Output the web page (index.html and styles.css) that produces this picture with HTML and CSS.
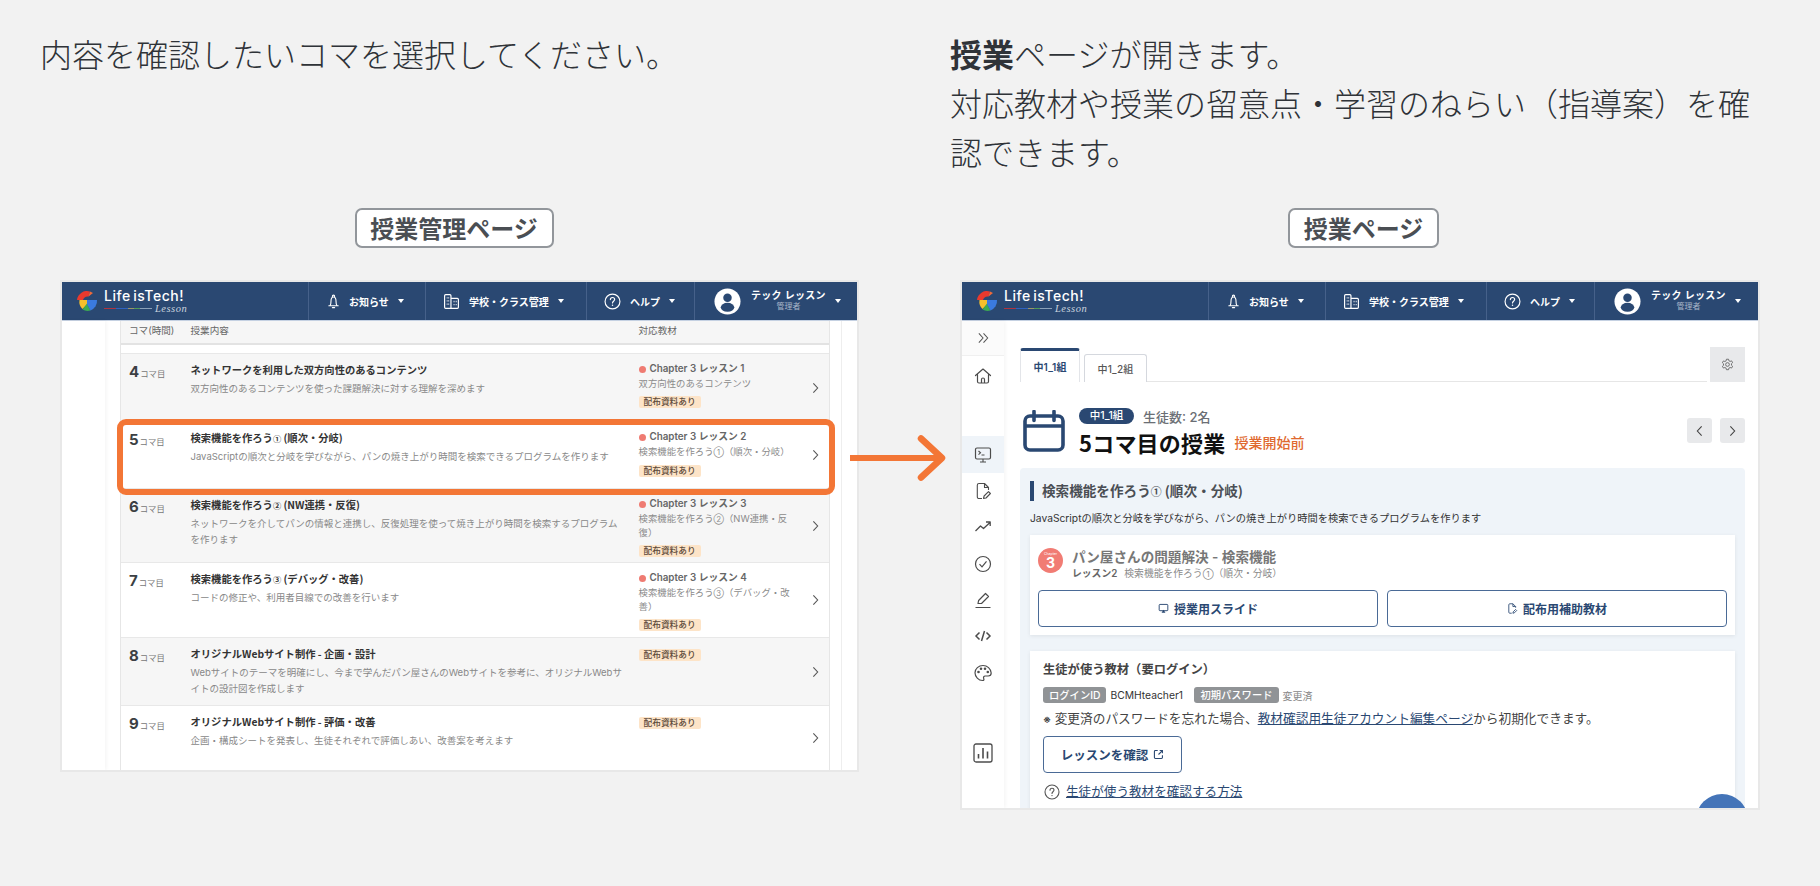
FILE: index.html
```html
<!DOCTYPE html>
<html lang="ja">
<head>
<meta charset="utf-8">
<title>授業ページ</title>
<link rel="stylesheet" href="styles.css">
</head>
<body>
<svg class="defs" xmlns="http://www.w3.org/2000/svg">
  <symbol id="logo" viewBox="0 0 24 24">
    <path d="M15 2.500 A10 10 0 0 0 2 11 H8 A5 5 0 0 1 13.500 7.500Z" fill="#e8392e"/>
    <path d="M15 2.500 L18 4 L13.500 7.500Z" fill="#ef6a3a"/>
    <path d="M4.500 11 H12 V15.500 L7.500 20 A10 10 0 0 1 4.500 11Z" fill="#f6c02c"/>
    <path d="M12 14.500 L15.500 21.400 A10 10 0 0 1 7.500 20.500Z" fill="#3cab54"/>
    <path d="M12 11 H22 A10 10 0 0 1 15.500 21.400 L12 15Z" fill="#3a7ae0"/>
  </symbol>
  <symbol id="bell" viewBox="0 0 16 16"><path d="M6.800 2.400a1.200 1.200 0 0 1 2.400 0M3 12.500h10M4.300 12.500c.8-1 1-2.400 1-4.500 0-2.200 1-4.800 2.700-4.800s2.700 2.600 2.700 4.800c0 2.100.2 3.500 1 4.500M6.800 14.500h2.400" fill="none" stroke="currentColor" stroke-width="1.200" stroke-linecap="round"/></symbol>
  <symbol id="school" viewBox="0 0 16 16"><path d="M1.500 2.500c0-.6.4-1 1-1h4c.6 0 1 .4 1 1v12h-5c-.6 0-1-.4-1-1zM7.500 5h6c.6 0 1 .4 1 1v7.500c0 .6-.4 1-1 1h-6z" fill="none" stroke="currentColor" stroke-width="1.100"/><path d="M3.500 4.500h.8M5 4.500h.8M3.500 7.500h.8M5 7.500h.8M3.500 10.500h.8M5 10.500h.8M10 8h.8M12 8h.8M10 11h.8M12 11h.8" stroke="currentColor" stroke-width="1.200"/></symbol>
  <symbol id="help" viewBox="0 0 16 16"><circle cx="8" cy="8" r="7" fill="none" stroke="currentColor" stroke-width="1.100"/><path d="M6 6.200c0-1.300 1-2 2-2s2 .8 2 1.900c0 1.600-2 1.700-2 3.300" fill="none" stroke="currentColor" stroke-width="1.100" stroke-linecap="round"/><circle cx="8" cy="11.600" r=".7" fill="currentColor"/></symbol>
  <symbol id="avatar" viewBox="0 0 28 28"><circle cx="14" cy="14" r="13.500" fill="#fff"/><circle cx="14" cy="10" r="4.400" fill="#2a4872"/><ellipse cx="14" cy="20" rx="7" ry="4.600" fill="#2a4872"/></symbol>
  <symbol id="chev-r" viewBox="0 0 8 14"><path d="M1.500 1.500 6.500 7l-5 5.500" fill="none" stroke="currentColor" stroke-width="1.300"/></symbol>
  <symbol id="chev-l" viewBox="0 0 8 14"><path d="M6.500 1.500 1.500 7l5 5.500" fill="none" stroke="currentColor" stroke-width="1.300"/></symbol>
  <symbol id="dbl" viewBox="0 0 14 12"><path d="M2 1l4.500 5L2 11M7 1l4.500 5L7 11" fill="none" stroke="currentColor" stroke-width="1.100"/></symbol>
  <symbol id="home" viewBox="0 0 18 18"><path d="M1.500 8.500 9 2l7.500 6.500M3.500 7.500v7c0 1 .6 1.500 1.500 1.500h8c.9 0 1.500-.5 1.500-1.500v-7M7.500 16v-3.500c0-.9.6-1.500 1.500-1.500s1.500.6 1.500 1.500V16" fill="none" stroke="currentColor" stroke-width="1.200" stroke-linejoin="round" stroke-linecap="round"/></symbol>
  <symbol id="terminal" viewBox="0 0 18 18"><rect x="1.500" y="2" width="15" height="11" rx="1.500" fill="none" stroke="currentColor" stroke-width="1.200"/><path d="M4.500 5l2 1.800-2 1.800M7.500 9h3M9 13v3M6 16h6" fill="none" stroke="currentColor" stroke-width="1.100"/></symbol>
  <symbol id="docedit" viewBox="0 0 18 18"><path d="M8 16.500H5c-1 0-1.700-.7-1.700-1.700V3.200c0-1 .7-1.700 1.700-1.700h5.500l4 4v2.500M10.500 1.500v4h4M9.500 16.500l.6-2.500 4.400-4.400 1.900 1.900L12 16z" fill="none" stroke="currentColor" stroke-width="1.100" stroke-linejoin="round"/></symbol>
  <symbol id="trend" viewBox="0 0 18 18"><path d="M1.500 13l5-5 3 2.500 6.500-6M12 4h4.200v4" fill="none" stroke="currentColor" stroke-width="1.300" stroke-linejoin="round"/></symbol>
  <symbol id="check" viewBox="0 0 18 18"><circle cx="9" cy="9" r="7.500" fill="none" stroke="currentColor" stroke-width="1.200"/><path d="M5.500 9.200 8 11.800l4.500-5.500" fill="none" stroke="currentColor" stroke-width="1.200"/></symbol>
  <symbol id="pen" viewBox="0 0 18 18"><path d="M1.500 16.500h15M4 12.500l.6-3L11.500 2.500l3 3-7 7z" fill="none" stroke="currentColor" stroke-width="1.200" stroke-linejoin="round"/></symbol>
  <symbol id="code" viewBox="0 0 18 18"><path d="M5.500 5.500 2 9l3.500 3.500M12.500 5.500 16 9l-3.500 3.500M10.500 4l-3 10" fill="none" stroke="currentColor" stroke-width="1.500"/></symbol>
  <symbol id="palette" viewBox="0 0 18 18"><path d="M9 1.500C4.600 1.500 1 4.700 1 8.800c0 4 3.500 7.700 7.500 7.700 1.500 0 1.700-1 1.200-2-.5-1 0-2.500 1.500-2.500h3c1.700 0 3-1.300 3-3C16.800 4.700 13.300 1.500 9 1.500z" fill="none" stroke="currentColor" stroke-width="1.200"/><circle cx="4.500" cy="8" r="1.300" fill="currentColor"/><circle cx="7" cy="4.800" r="1.300" fill="currentColor"/><circle cx="11" cy="4.800" r="1.300" fill="currentColor"/><circle cx="13.800" cy="8" r="1.300" fill="currentColor"/></symbol>
  <symbol id="chart" viewBox="0 0 20 20"><rect x="1" y="1" width="18" height="18" rx="2" fill="none" stroke="currentColor" stroke-width="1.300"/><path d="M5.500 11v4.500M10 5v10.500M14.500 8.500v7" fill="none" stroke="currentColor" stroke-width="1.600"/></symbol>
  <symbol id="gear" viewBox="0 0 16 16"><path d="M6.700 1.500h2.600l.4 1.900 1.500.8 1.800-.7 1.300 2.200-1.400 1.300v1.900l1.400 1.300-1.300 2.200-1.800-.7-1.500.8-.4 1.900H6.700l-.4-1.900-1.500-.8-1.800.7-1.300-2.200L3.100 9V7.100L1.700 5.800 3 3.600l1.800.7 1.500-.8z" fill="none" stroke="currentColor" stroke-width="1" stroke-linejoin="round"/><circle cx="8" cy="8" r="2.300" fill="none" stroke="currentColor" stroke-width="1"/></symbol>
  <symbol id="calendar" viewBox="0 0 42 42"><rect x="2" y="6" width="38" height="34" rx="5" fill="none" stroke="#2a4872" stroke-width="3.600"/><path d="M2 16h38" stroke="#2a4872" stroke-width="3.600"/><path d="M11 1.500v9M31 1.500v9" stroke="#2a4872" stroke-width="3.600" stroke-linecap="round"/></symbol>
  <symbol id="slide" viewBox="0 0 14 14"><rect x="1.500" y="1.800" width="11" height="8" rx="1" fill="none" stroke="currentColor" stroke-width="1.200"/><path d="M7 8.500l2.500 4h-5z" fill="currentColor"/></symbol>
  <symbol id="doc" viewBox="0 0 14 14"><path d="M6 13H3.500c-.7 0-1.200-.5-1.200-1.200V2.200C2.300 1.500 2.800 1 3.500 1h4l3.500 3.500v1.500M7.500 1v3.500H11M7.500 13l.4-1.800 3-3 1.400 1.400-3 3z" fill="none" stroke="currentColor" stroke-width="1.100"/></symbol>
  <symbol id="ext" viewBox="0 0 14 14"><path d="M6 2H3c-.7 0-1.200.5-1.200 1.200v7.600c0 .7.500 1.200 1.200 1.200h7.800c.7 0 1.200-.5 1.200-1.200V8M8.500 2H12v3.500M12 2 7 7" fill="none" stroke="currentColor" stroke-width="1.400"/></symbol>
</svg>

<main class="page">
  <section class="col col-left">
    <div class="caption"><p>内容を確認したいコマを選択してください。</p></div>
    <div class="pill pill-left">授業管理ページ</div>
    <div class="window window-left">
      <header class="topbar">
        <div class="brand"><svg class="logo"><use href="#logo"/></svg><div class="brand-text"><span class="brand-name">Life isTech!</span><span class="brand-sub"><i class="rainbow"></i><em>Lesson</em></span></div></div>
        <div class="nav nav-a"><svg class="ni"><use href="#bell"/></svg><span>お知らせ</span><i class="caret"></i></div>
        <div class="nav nav-b"><svg class="ni ni-l"><use href="#school"/></svg><span>学校・クラス管理</span><i class="caret"></i></div>
        <div class="nav nav-c"><svg class="ni ni-l"><use href="#help"/></svg><span>ヘルプ</span><i class="caret"></i></div>
        <div class="nav nav-d"><svg class="av"><use href="#avatar"/></svg><div class="who"><span class="who-name">テック レッスン</span><span class="who-role">管理者</span></div><i class="caret"></i></div>
      </header>
      <div class="mgmt">
        <div class="mgmt-side"></div>
        <div class="mgmt-main">
          <div class="table">
            <div class="thead"><span>コマ(時間)</span><span>授業内容</span><span>対応教材</span></div>
            <div class="tgap"></div>
            <div class="tbody">
              <div class="row alt">
                <div class="num"><b>4</b>コマ目</div>
                <div class="lesson"><h3>ネットワークを利用した双方向性のあるコンテンツ</h3><p>双方向性のあるコンテンツを使った課題解決に対する理解を深めます</p></div>
                <div class="mat"><div class="chap"><i></i>Chapter 3 レッスン 1</div><div class="mname">双方向性のあるコンテンツ</div><span class="tag">配布資料あり</span></div>
                <svg class="go"><use href="#chev-r"/></svg>
              </div>
              <div class="row">
                <div class="num"><b>5</b>コマ目</div>
                <div class="lesson"><h3>検索機能を作ろう<span class="circ">①</span> (順次・分岐)</h3><p>JavaScriptの順次と分岐を学びながら、パンの焼き上がり時間を検索できるプログラムを作ります</p></div>
                <div class="mat"><div class="chap"><i></i>Chapter 3 レッスン 2</div><div class="mname">検索機能を作ろう<span class="circ">①</span>（順次・分岐）</div><span class="tag">配布資料あり</span></div>
                <svg class="go"><use href="#chev-r"/></svg>
              </div>
              <div class="row alt">
                <div class="num"><b>6</b>コマ目</div>
                <div class="lesson"><h3>検索機能を作ろう<span class="circ">②</span> (NW連携・反復)</h3><p>ネットワークを介してパンの情報と連携し、反復処理を使って焼き上がり時間を検索するプログラムを作ります</p></div>
                <div class="mat"><div class="chap"><i></i>Chapter 3 レッスン 3</div><div class="mname">検索機能を作ろう<span class="circ">②</span>（NW連携・反<br>復）</div><span class="tag">配布資料あり</span></div>
                <svg class="go"><use href="#chev-r"/></svg>
              </div>
              <div class="row">
                <div class="num"><b>7</b>コマ目</div>
                <div class="lesson"><h3>検索機能を作ろう<span class="circ">③</span> (デバッグ・改善)</h3><p>コードの修正や、利用者目線での改善を行います</p></div>
                <div class="mat"><div class="chap"><i></i>Chapter 3 レッスン 4</div><div class="mname">検索機能を作ろう<span class="circ">③</span>（デバッグ・改<br>善）</div><span class="tag">配布資料あり</span></div>
                <svg class="go"><use href="#chev-r"/></svg>
              </div>
              <div class="row alt">
                <div class="num"><b>8</b>コマ目</div>
                <div class="lesson"><h3>オリジナルWebサイト制作 - 企画・設計</h3><p>Webサイトのテーマを明確にし、今まで学んだパン屋さんのWebサイトを参考に、オリジナルWebサイトの設計図を作成します</p></div>
                <div class="mat"><span class="tag">配布資料あり</span></div>
                <svg class="go"><use href="#chev-r"/></svg>
              </div>
              <div class="row">
                <div class="num"><b>9</b>コマ目</div>
                <div class="lesson"><h3>オリジナルWebサイト制作 - 評価・改善</h3><p>企画・構成シートを発表し、生徒それぞれで評価しあい、改善案を考えます</p></div>
                <div class="mat"><span class="tag">配布資料あり</span></div>
                <svg class="go"><use href="#chev-r"/></svg>
              </div>
            </div>
          </div>
        </div>
      </div>
      <div class="highlight"></div>
    </div>
  </section>

  <section class="col col-right">
    <div class="caption"><p><strong>授業</strong>ページが開きます。<br>対応教材や授業の留意点・学習のねらい（指導案）を確認できます。</p></div>
    <div class="pill pill-right">授業ページ</div>
    <div class="window window-right">
      <header class="topbar">
        <div class="brand"><svg class="logo"><use href="#logo"/></svg><div class="brand-text"><span class="brand-name">Life isTech!</span><span class="brand-sub"><i class="rainbow"></i><em>Lesson</em></span></div></div>
        <div class="nav nav-a"><svg class="ni"><use href="#bell"/></svg><span>お知らせ</span><i class="caret"></i></div>
        <div class="nav nav-b"><svg class="ni ni-l"><use href="#school"/></svg><span>学校・クラス管理</span><i class="caret"></i></div>
        <div class="nav nav-c"><svg class="ni ni-l"><use href="#help"/></svg><span>ヘルプ</span><i class="caret"></i></div>
        <div class="nav nav-d"><svg class="av"><use href="#avatar"/></svg><div class="who"><span class="who-name">テック レッスン</span><span class="who-role">管理者</span></div><i class="caret"></i></div>
      </header>
      <div class="lesson-page">
        <aside class="side">
          <div class="side-toggle"><svg class="si-s"><use href="#dbl"/></svg></div>
          <div class="si si-home"><svg><use href="#home"/></svg></div>
          <div class="si si-active"><svg><use href="#terminal"/></svg></div>
          <div class="si"><svg><use href="#docedit"/></svg></div>
          <div class="si"><svg><use href="#trend"/></svg></div>
          <div class="si"><svg><use href="#check"/></svg></div>
          <div class="si"><svg><use href="#pen"/></svg></div>
          <div class="si"><svg><use href="#code"/></svg></div>
          <div class="si"><svg><use href="#palette"/></svg></div>
          <div class="si si-chart"><svg class="si-big"><use href="#chart"/></svg></div>
        </aside>
        <div class="content">
          <div class="tabs">
            <div class="tab tab-on">中1_1組</div>
            <div class="tab">中1_2組</div>
            <div class="tab-line"></div>
            <div class="tab-gear"><svg><use href="#gear"/></svg></div>
          </div>
          <div class="heading">
            <svg class="cal"><use href="#calendar"/></svg>
            <div class="heading-text">
              <div class="meta"><span class="badge">中1_1組</span><span class="count">生徒数: 2名</span></div>
              <div class="title-row"><h1>5コマ目の授業</h1><span class="status">授業開始前</span></div>
            </div>
            <div class="pager"><span class="pg"><svg><use href="#chev-l"/></svg></span><span class="pg"><svg><use href="#chev-r"/></svg></span></div>
          </div>
          <div class="panel">
            <h2>検索機能を作ろう<span class="circ">①</span> (順次・分岐)</h2>
            <p class="panel-desc">JavaScriptの順次と分岐を学びながら、パンの焼き上がり時間を検索できるプログラムを作ります</p>
            <div class="card card-a">
              <div class="chapter">
                <div class="chapter-badge"><small>Chapter</small><b>3</b></div>
                <div class="chapter-text"><div class="chapter-title">パン屋さんの問題解決 - 検索機能</div><div class="chapter-sub"><b>レッスン2</b><span>検索機能を作ろう<span class="circ">①</span>（順次・分岐）</span></div></div>
              </div>
              <div class="btns">
                <div class="btn"><svg><use href="#slide"/></svg>授業用スライド</div>
                <div class="btn"><svg><use href="#doc"/></svg>配布用補助教材</div>
              </div>
            </div>
            <div class="card card-b">
              <h4>生徒が使う教材（要ログイン）</h4>
              <div class="creds"><span class="cred">ログインID</span><span class="cred-v">BCMHteacher1</span><span class="cred cred-2">初期パスワード</span><span class="cred-m">変更済</span></div>
              <p class="note"><small>※</small> 変更済のパスワードを忘れた場合、<a>教材確認用生徒アカウント編集ページ</a>から初期化できます。</p>
              <div class="btn btn-lesson">レッスンを確認<svg><use href="#ext"/></svg></div>
              <div class="howto"><svg><use href="#help"/></svg><a>生徒が使う教材を確認する方法</a></div>
            </div>
            <div class="fab"></div>
          </div>
        </div>
      </div>
    </div>
  </section>

  <svg class="arrow" viewBox="0 0 96 46"><path d="M0 23H91" fill="none" stroke="#f37636" stroke-width="6"/><path d="M71 3.500 92 23 71 42.500" fill="none" stroke="#f37636" stroke-width="6.500" stroke-linecap="round" stroke-linejoin="round"/></svg>
</main>
</body>
</html>
```
FILE: styles.css
```css
* { box-sizing: border-box; }
html, body { margin: 0; height: 100%; }
body {
  background: #f2f2f2;
  font-family: Inter, "Noto Sans CJK JP", sans-serif;
  color: #3f4348;
  overflow: hidden;
}
p, h1, h2, h3, h4 { margin: 0; }
.defs { display: none; }
.circ { font-size: .8em; }
.page {
  position: relative;
  display: grid;
  grid-template-columns: 951px 869px;
  height: 886px;
}
.col { display: flex; flex-direction: column; align-items: flex-start; min-width: 0; }
.col-left { padding-left: 41px; }
.col-right { padding-left: 0; }
.caption {
  height: 208px;
  padding-top: 29px;
  margin-left: -1px;
  font-size: 32px;
  line-height: 49px;
  font-weight: 300;
  font-family: "Noto Sans CJK JP", sans-serif;
  color: #2f3338;
}
.col-right .caption { width: 810px; }
.caption strong { font-weight: 700; }
.pill {
  height: 40px;
  border: 2px solid #92969b;
  border-radius: 7px;
  background: #fff;
  font-family: "Noto Sans CJK JP", sans-serif;
  font-size: 24px;
  font-weight: 700;
  line-height: 35px;
  color: #4a4e53;
  text-align: center;
}
.pill-left { width: 199px; margin-left: 313.500px; }
.pill-right { width: 151px; margin-left: 337px; }
.window {
  position: relative;
  background: #fff;
  margin-top: 34px;
  box-shadow: 0 0 0 2px #e8e8e8;
  overflow: hidden;
}
.window-left { width: 795px; height: 488px; margin-left: 21px; }
.window-right { width: 796px; height: 526px; margin-left: 11px; display: flex; flex-direction: column; }

/* top bar */
.topbar {
  display: grid;
  grid-template-columns: 246px 117px 161px 108px 164px;
  height: 39px;
  background: #2a4872;
  border-bottom: 1px solid #c5d1e2;
  color: #fff;
  flex: none;
}
.brand { display: flex; align-items: center; padding-left: 13px; gap: 3px; }
.logo { width: 24px; height: 24px; flex: none; }
.brand-text { display: flex; flex-direction: column; margin-left: 2px; margin-top: 1px; }
.brand-name { font-size: 14px; line-height: 14px; font-weight: 500; letter-spacing: .5px; word-spacing: -1.500px; }
.brand-sub { display: flex; align-items: center; height: 12px; }
.rainbow { display: block; width: 48px; height: 1px; background: linear-gradient(90deg, #b0343f 0 25%, #2e62c0 25% 50%, #9a9468 50% 62%, #4f9a5a 62% 75%, #8aa0b8 75%); }
.brand-sub em { font-family: "Liberation Serif", serif; font-size: 10.500px; margin-left: 3px; color: #c9d3df; letter-spacing: .5px; font-weight: 400; }
.nav {
  display: flex;
  align-items: center;
  border-left: 1px solid #46618a;
  font-size: 10px;
  font-weight: 600;
  padding-left: 17px;
}
.ni { width: 15px; height: 15px; flex: none; margin-right: 8px; }
.ni-l { width: 17px; height: 17px; margin-right: 9px; }
.caret {
  display: block;
  width: 0;
  height: 0;
  margin-left: 9px;
  border-left: 3px solid transparent;
  border-right: 3px solid transparent;
  border-top: 4px solid #fff;
}
.nav-d { padding-left: 19px; }
.av { width: 27px; height: 27px; flex: none; }
.who { display: flex; flex-direction: column; align-items: center; margin-left: 10px; line-height: 11px; }
.who-name { letter-spacing: .3px; font-size: 10px; }
.who-role { font-size: 8px; color: #a9b6c8; font-weight: 400; }

/* management page */
.mgmt { display: flex; height: 449px; }
.mgmt-side { width: 43px; flex: none; box-shadow: 1px 0 4px rgba(0,0,0,.05); }
.mgmt-main { width: 737px; flex: none; padding: 0 11px 0 15px; border-right: 1px solid #eee; }
.table { border-left: 1px solid #e6e6e6; border-right: 1px solid #e6e6e6; height: 100%; }
.thead {
  display: grid;
  grid-template-columns: 61.500px 448px 1fr;
  padding-left: 8px;
  height: 24px;
  background: #f6f6f6;
  border-bottom: 2px solid #e3e3e3;
  font-size: 9.600px;
  line-height: 19px;
  color: #666;
}
.tgap { height: 9px; border-bottom: 1px solid #e8e8e8; }
.tbody { display: grid; grid-template-rows: 68px 67px 74px 75px 68px 64px; }
.row {
  display: grid;
  grid-template-columns: 61.500px 434px 14px 156px 1fr;
  grid-template-areas: "num les . mat go";
  padding-left: 8px;
  padding-top: 8px;
  border-bottom: 1px solid #e8e8e8;
  position: relative;
}
.row:last-child { border-bottom: 0; }
.alt { background: #f6f6f6; }
.num { grid-area: num; font-size: 8.400px; color: #777; line-height: 20px; }
.num b { font-size: 15px; color: #3c3f44; font-weight: 700; margin-right: 1px; }
.lesson { grid-area: les; }
.lesson h3 { font-size: 10.300px; line-height: 16px; font-weight: 700; color: #333; font-family: "Noto Sans CJK JP", sans-serif; }
.lesson p { font-size: 9.500px; line-height: 16px; color: #888; margin-top: 3px; }
.mat { grid-area: mat; font-size: 9.400px; line-height: 13px; color: #8b8b8b; display: flex; flex-direction: column; align-items: flex-start; }
.chap { font-size: 9.800px; font-weight: 600; color: #666; display: flex; align-items: center; line-height: 14px; margin-bottom: .5px; }
.chap i { width: 7px; height: 7px; border-radius: 50%; background: #ef7b72; margin-right: 4px; flex: none; }
.tag { font-size: 8.700px; line-height: 12px; background: #fde4c8; color: #5c4a3a; padding: 0 5px; border-radius: 2px; margin-top: 6px; font-weight: 500; }
.mat > .tag:first-child { margin-top: 3px; }
.go { grid-area: go; align-self: center; justify-self: start; width: 7px; height: 12px; margin: -8px 0 0 17px; color: #555; }
.highlight {
  position: absolute;
  left: 55px;
  top: 137px;
  width: 718px;
  height: 76px;
  border: 6px solid #f37636;
  border-radius: 9px;
}

/* lesson page */
.lesson-page { flex: 1; min-height: 0; display: flex; }
.side { width: 42px; flex: none; display: flex; flex-direction: column; box-shadow: 1px 0 4px rgba(0,0,0,.05); }
.side-toggle { height: 35px; flex: none; background: #fbfbfb; border-bottom: 1px solid #f0f0f0; display: flex; align-items: center; justify-content: center; color: #555; }
.si-s { width: 13px; height: 12px; }
.si { height: 36.300px; display: flex; align-items: center; justify-content: center; color: #4c4c4c; flex: none; }
.si svg { width: 18px; height: 18px; }
.si-home { height: 40px; margin-bottom: 40px; }
.si-active { background: #eff4f9; height: 37px; }
.si-chart { margin-top: 44px; }
.si svg.si-big { width: 20px; height: 20px; }
.content { flex: 1; min-width: 0; display: flex; flex-direction: column; padding: 0 13px 0 16px; }
.tabs { display: flex; align-items: flex-end; margin-top: 26px; height: 35px; flex: none; font-size: 10px; }
.tab { width: 63px; height: 28px; border: 1px solid #d5d8de; border-bottom: 0; border-radius: 3px 3px 0 0; display: flex; align-items: center; justify-content: center; color: #555; font-weight: 500; letter-spacing: .2px; }
.tab-on { width: 60px; height: 34px; border: 1px solid #e3e5e9; border-top: 3px solid #2a4872; border-bottom: 0; color: #2a4872; margin-right: 4px; font-weight: 600; }
.tab-line { flex: 1; height: 1px; background: #e6e6e6; margin-right: 3px; }
.tab-gear { width: 35px; height: 35px; background: #e8e9eb; display: flex; align-items: center; justify-content: center; color: #5a5a5a; }
.tab-gear svg { width: 13px; height: 13px; }
.heading { display: flex; align-items: flex-start; margin-top: 26px; height: 60px; flex: none; position: relative; padding-left: 3px; }
.cal { width: 42px; height: 42px; flex: none; margin-top: 2px; }
.heading-text { margin-left: 14px; }
.meta { display: flex; align-items: center; height: 16px; }
.badge { width: 55px; height: 16px; border-radius: 8px; background: #2a4872; color: #fff; font-size: 10.500px; line-height: 16px; text-align: center; font-weight: 500; }
.count { margin-left: 9px; font-size: 13px; font-weight: 500; color: #6b6f75; }
.title-row { display: flex; align-items: center; height: 36px; }
h1 { font-size: 22px; font-weight: 700; color: #111; line-height: 36px; font-family: "Noto Sans CJK JP", sans-serif; letter-spacing: .2px; }
.status { font-size: 14px; color: #e0692f; margin-left: 9px; font-weight: 500; }
.pager { margin-left: auto; margin-top: 10px; display: flex; gap: 8px; }
.pg { width: 25px; height: 25px; background: #e8e9eb; border-radius: 3px; display: flex; align-items: center; justify-content: center; color: #444; }
.pg svg { width: 7px; height: 12px; }
.panel { position: relative; flex: 1; min-height: 0; overflow: hidden; background: #eff4f9; border-radius: 4px 4px 0 0; padding: 12px 10px 0; }
.panel h2 { font-size: 13.600px; line-height: 18px; height: 20px; font-weight: 700; color: #4a4e54; border-left: 4.500px solid #2a4872; padding-left: 8px; font-family: "Noto Sans CJK JP", sans-serif; margin-top: 1px; }
.panel-desc { font-size: 10.260px; line-height: 18px; margin-top: 8px; color: #333; }
.card { background: #fff; box-shadow: 0 1px 4px rgba(0,0,0,.08); }
.card-a { margin-top: 8px; height: 100px; padding: 13px 8px 8px; }
.chapter { display: flex; height: 34px; }
.chapter-badge { width: 25px; height: 25px; border-radius: 50%; background: #f17c74; color: #fff; display: flex; flex-direction: column; align-items: center; flex: none; }
.chapter-badge small { font-size: 3.500px; line-height: 6px; margin-top: 3px; }
.chapter-badge b { font-size: 14px; line-height: 12px; }
.chapter-text { margin-left: 9px; }
.chapter-title { font-size: 13.600px; line-height: 19px; font-weight: 600; color: #777; }
.chapter-sub { font-size: 9.800px; line-height: 14px; color: #8a8a8a; }
.chapter-sub b { color: #666; font-weight: 600; margin-right: 7px; }
.btns { display: flex; gap: 9px; margin-top: 8px; }
.btn { flex: 1; height: 37px; border: 1px solid #4a6a96; border-radius: 4px; display: flex; align-items: center; justify-content: center; font-size: 12px; font-weight: 600; color: #2a4872; gap: 5px; }
.btn svg { width: 11px; height: 11px; }
.card-b { margin-top: 16px; height: 200px; padding: 10px 13px 0; }
.card-b h4 { font-size: 12.300px; line-height: 18px; font-weight: 600; color: #444; }
.creds { display: flex; align-items: center; margin-top: 8px; height: 16px; font-size: 10.300px; }
.cred { height: 16px; line-height: 16px; background: #909396; color: #fff; font-size: 10.300px; border-radius: 3px; padding: 0 6px; font-weight: 500; }
.cred-v { margin-left: 4px; color: #333; width: 84px; }
.cred-m { margin-left: 4px; color: #888; font-size: 10px; }
.note { font-size: 12.700px; line-height: 20px; margin-top: 6px; color: #444; white-space: nowrap; }
.note small { font-size: 10px; font-weight: 700; }
a { color: #2a4872; text-decoration: underline; }
.btn-lesson { flex: none; width: 139px; margin-top: 7px; font-size: 12.500px; gap: 5px; }
.howto { display: flex; align-items: center; margin-top: 9px; font-size: 12.600px; line-height: 20px; }
.howto svg { width: 16px; height: 16px; color: #555; margin-left: 1px; margin-right: 6px; }
.fab { position: absolute; width: 52px; height: 52px; border-radius: 50%; background: #4474b8; right: -3px; top: 326px; }
.arrow { position: absolute; left: 850px; top: 435px; width: 96px; height: 46px; }
```
